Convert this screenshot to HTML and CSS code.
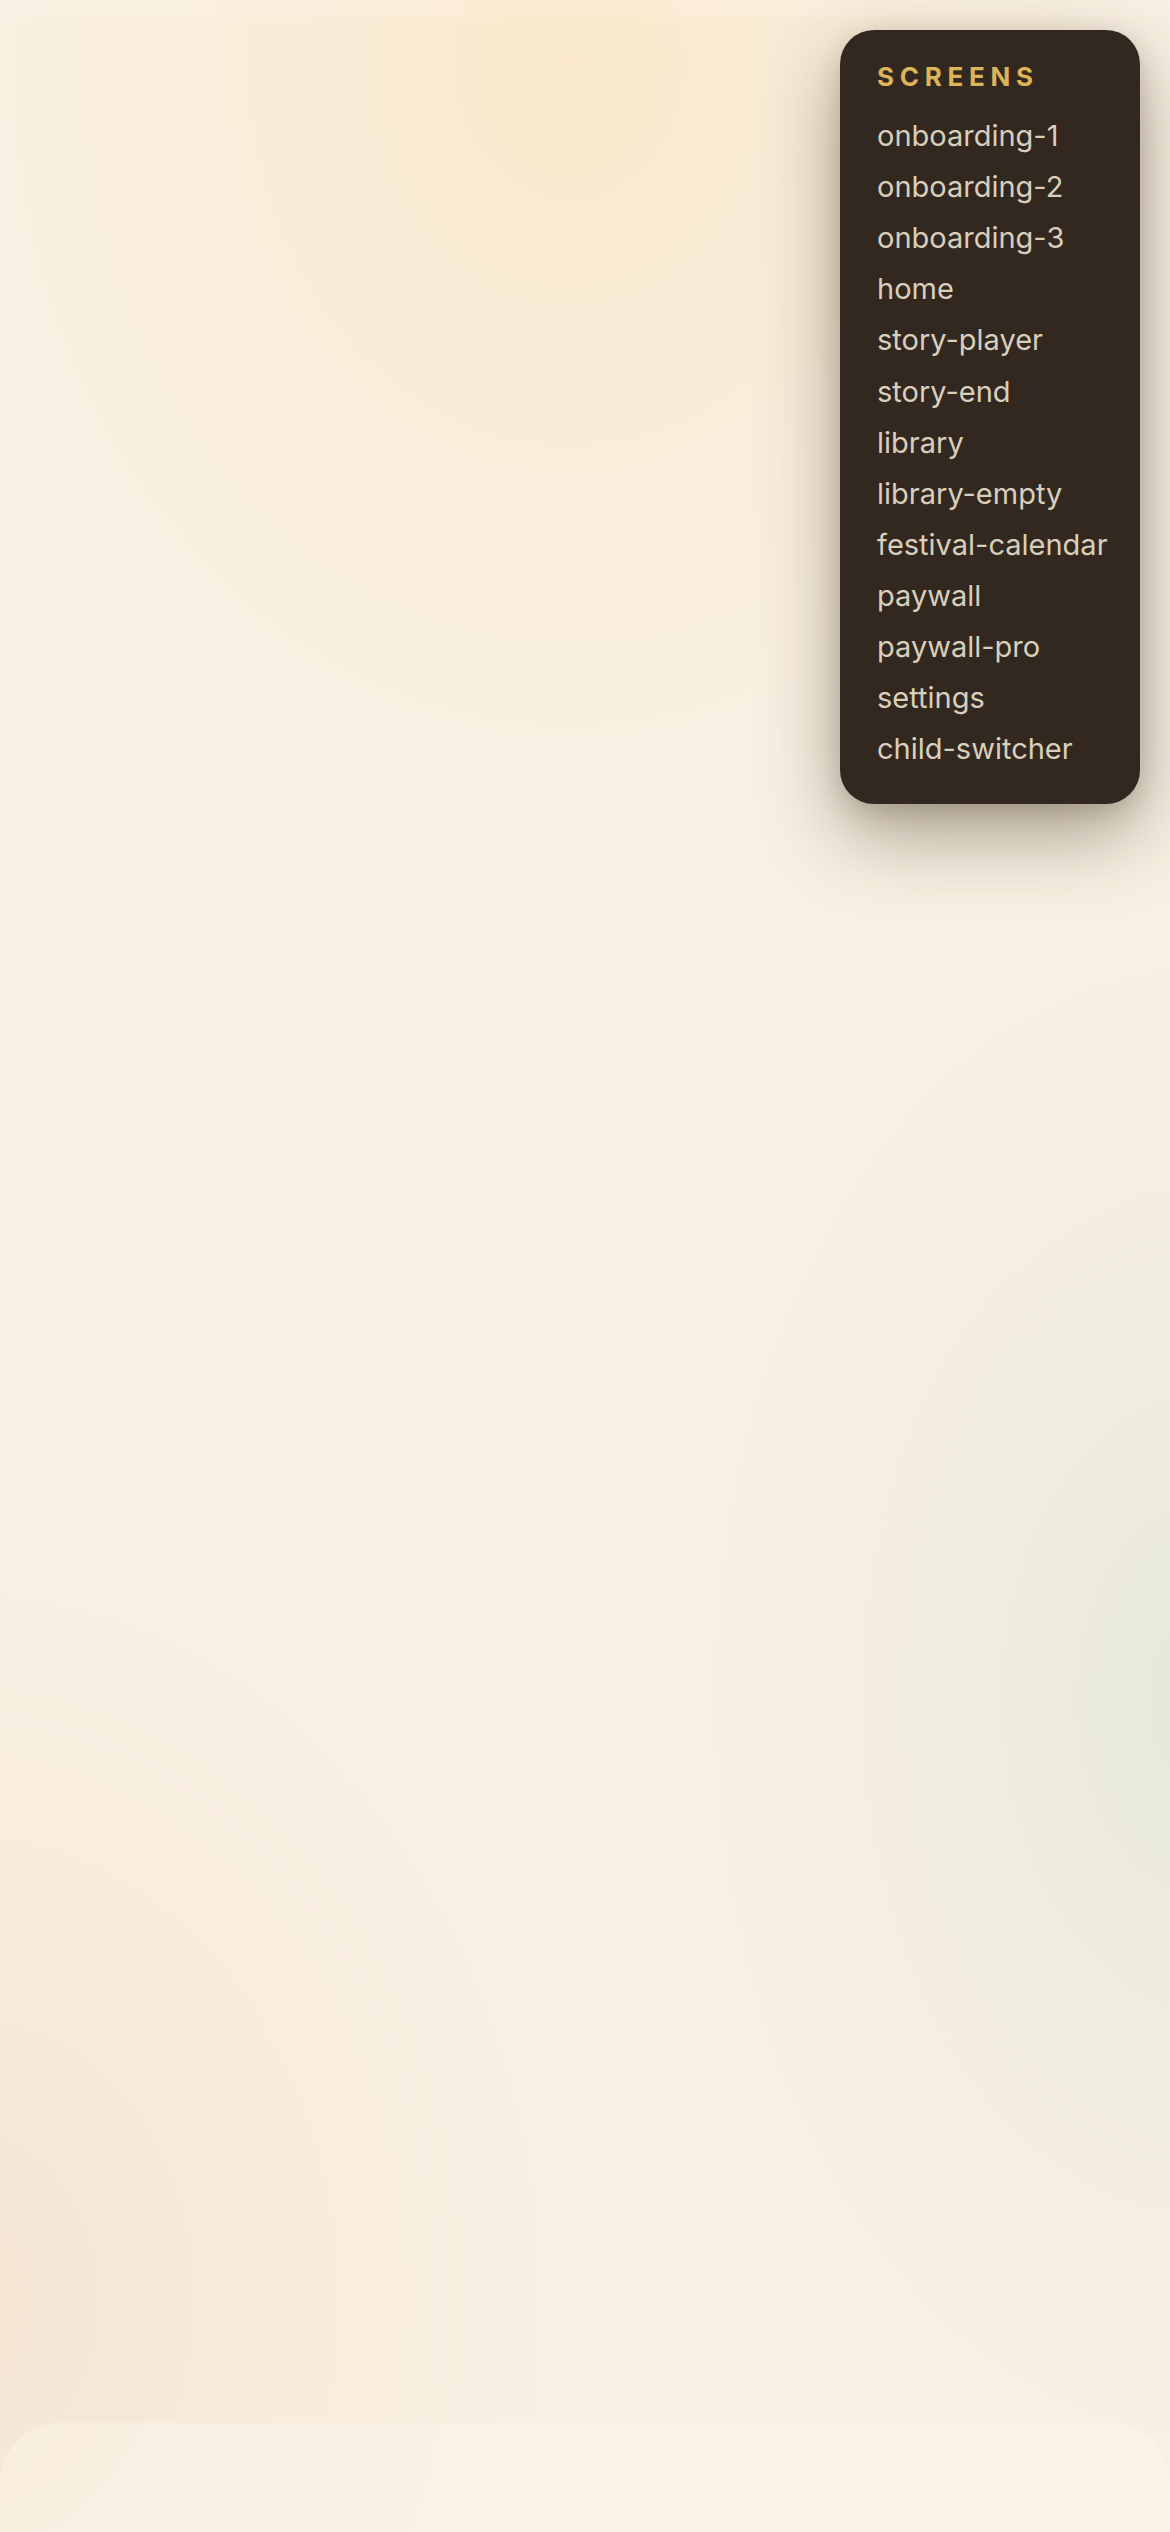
FILE: index.html
```html
<!DOCTYPE html>
<html lang="en">
<head>
<meta charset="utf-8">
<title>Screens</title>
<link rel="stylesheet" href="styles.css">
</head>
<body>
<div class="app">
  <div class="status-band"></div>
  <main class="canvas"></main>
  <div class="bottom-bar"></div>
</div>
<nav class="screens-panel">
  <div class="screens-title">SCREENS</div>
  <ul class="screens-list">
    <li class="screen-link">onboarding-1</li>
    <li class="screen-link">onboarding-2</li>
    <li class="screen-link">onboarding-3</li>
    <li class="screen-link">home</li>
    <li class="screen-link">story-player</li>
    <li class="screen-link">story-end</li>
    <li class="screen-link">library</li>
    <li class="screen-link">library-empty</li>
    <li class="screen-link">festival-calendar</li>
    <li class="screen-link">paywall</li>
    <li class="screen-link">paywall-pro</li>
    <li class="screen-link">settings</li>
    <li class="screen-link">child-switcher</li>
  </ul>
</nav>
</body>
</html>
```

FILE: styles.css
```css
* { box-sizing: border-box; }

html, body {
  margin: 0;
  padding: 0;
}

body {
  width: 1170px;
  height: 2532px;
  overflow: hidden;
  font-family: Inter, "Noto Sans", "Liberation Sans", sans-serif;
  background-color: #f9f0e3;
  background-image:
    radial-gradient(ellipse 600px 720px at 570px 60px, rgba(250, 232, 200, 0.95) 0%, rgba(249, 234, 208, 0.55) 45%, rgba(249, 240, 227, 0) 100%),
    radial-gradient(ellipse 540px 800px at 1210px 1700px, rgba(229, 232, 215, 1) 0%, rgba(234, 235, 219, 0.6) 40%, rgba(249, 240, 227, 0) 100%),
    radial-gradient(ellipse 640px 780px at -40px 2300px, rgba(244, 228, 210, 1) 0%, rgba(245, 232, 216, 0.6) 45%, rgba(249, 240, 227, 0) 100%);
  position: relative;
}

.app {
  display: flex;
  flex-direction: column;
  height: 2532px;
}

.status-band {
  height: 17px;
  background: rgba(255, 250, 242, 0.18);
}

.canvas {
  flex: 1;
}

.bottom-bar {
  height: 109px;
  border-radius: 60px 60px 0 0;
  background: rgba(253, 247, 236, 0.45);
}

.screens-panel {
  position: absolute;
  top: 30px;
  right: 30px;
  width: 300px;
  padding: 31px 20px 29px 37px;
  background: #332820;
  border-radius: 34px;
  box-shadow: 0 30px 80px rgba(55, 42, 25, 0.42), 0 8px 24px rgba(55, 42, 25, 0.16);
}

.screens-title {
  font-size: 26px;
  line-height: 32px;
  font-weight: 700;
  letter-spacing: 0.22em;
  color: #dcb45a;
  margin-bottom: 18px;
}

.screens-list {
  list-style: none;
  margin: 0;
  padding: 0;
}

.screen-link {
  font-size: 29px;
  line-height: 34.8px;
  padding: 8.15px 0;
  color: #d8cfbd;
  white-space: nowrap;
}
```
